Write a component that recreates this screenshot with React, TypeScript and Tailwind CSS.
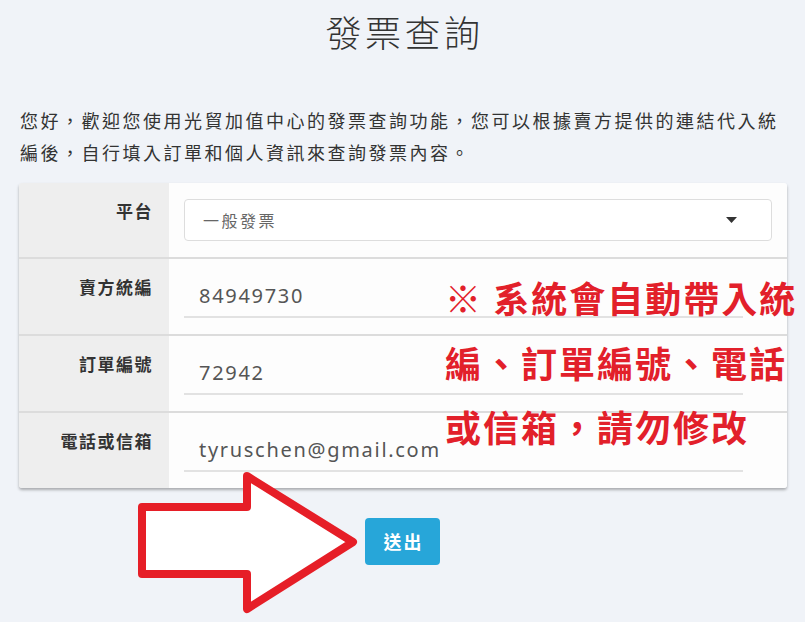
import React from "react";

const FONT = "font-['Noto_Sans','Noto_Sans_CJK_TC',sans-serif]";

function Row({ label, children, first }: { label: string; children: React.ReactNode; first?: boolean }) {
  return (
    <div className={`flex ${first ? "" : "border-t-2 border-[#dcdcdc]"}`}>
      <div className="w-[150px] shrink-0 bg-[#eeeeee] pt-[17px] pr-[16px] text-right text-[17px] leading-[24px] font-bold tracking-[1.5px] text-[#333]">
        {label}
      </div>
      <div className="flex-1 bg-[#fdfdfd] px-[15px] py-[16px]">{children}</div>
    </div>
  );
}

function Field({ value }: { value: string }) {
  return (
    <div className="w-[559px] h-[43px] border-b-2 border-[#e2e2e2] pl-[15px] flex items-center text-[20px] tracking-[1.7px] text-[#555]">
      {value}
    </div>
  );
}

export default function App() {
  return (
    <div className={`relative w-[805px] h-[622px] overflow-hidden bg-[#f0f3f8] ${FONT}`}>
      <h1 className="pt-[5px] text-center text-[36px] leading-[52px] font-light tracking-[3.5px] pl-[4px] text-[#333] font-['Noto_Sans_CJK_TC',sans-serif]">
        發票查詢
      </h1>
      <p className="mt-[47px] pl-[20px] w-[785px] text-[18px] leading-[32px] tracking-[2.5px] text-[#333] font-['Noto_Sans_CJK_TC',sans-serif]">
        您好，歡迎您使用光貿加值中心的發票查詢功能，您可以根據賣方提供的連結代入統編後，自行填入訂單和個人資訊來查詢發票內容。
      </p>

      <div className="mt-[15px] ml-[19px] w-[768px] rounded-[3px] overflow-hidden shadow-[0_2px_3px_rgba(0,0,0,0.3)]">
        <Row label="平台" first>
          <div className="h-[42px] rounded-[4px] border border-[#dddddd] bg-white flex items-center justify-between pl-[18px] pr-[34px]">
            <span className="text-[16px] tracking-[2.5px] text-[#666] font-['Noto_Sans_CJK_TC',sans-serif]">一般發票</span>
            <svg width="11" height="6" viewBox="0 0 11 6">
              <path d="M0 0 L11 0 L5.5 6 Z" fill="#333" />
            </svg>
          </div>
        </Row>
        <Row label="賣方統編">
          <Field value="84949730" />
        </Row>
        <Row label="訂單編號">
          <Field value="72942" />
        </Row>
        <Row label="電話或信箱">
          <Field value="tyruschen@gmail.com" />
        </Row>
      </div>

      <div className="mt-[30px] flex justify-center">
        <button className="w-[75px] h-[47px] rounded-[4px] bg-[#27a6d9] text-white text-[18px] font-bold tracking-[2px] pl-[2px] font-['Noto_Sans_CJK_TC',sans-serif]">
          送出
        </button>
      </div>

      {/* annotation text */}
      <div className="absolute left-[445px] top-[265px] text-[36px] leading-[64.5px] font-bold tracking-[2px] text-[#e2202a] whitespace-nowrap font-['Noto_Sans_CJK_TC',sans-serif]">
        <div>※ 系統會自動帶入統</div>
        <div>編、訂單編號、電話</div>
        <div>或信箱，請勿修改</div>
      </div>

      {/* annotation arrow */}
      <svg className="absolute left-0 top-0 pointer-events-none" width="805" height="622" viewBox="0 0 805 622">
        <polygon
          points="142,507 247,507 247,476 353,542 247,609 247,574 142,574"
          fill="#ffffff"
          stroke="#e61e27"
          strokeWidth="8"
          strokeLinejoin="round"
        />
      </svg>
    </div>
  );
}
